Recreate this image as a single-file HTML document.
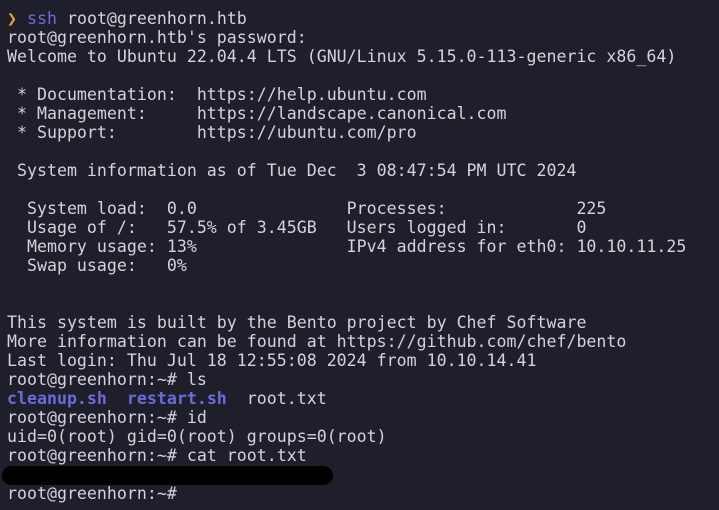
<!DOCTYPE html>
<html><head><style>
html,body{margin:0;padding:0;background:#1e1f2b;width:719px;height:510px;overflow:hidden}
pre{margin:0;position:absolute;left:7px;top:9px;font-family:"DejaVu Sans Mono","Liberation Mono",monospace;font-size:16.6px;line-height:19px;color:#d2d3dc;white-space:pre}
.o{color:#f0a030}.b{color:#6b6bdc}.bb{color:#6b6bdc;font-weight:bold}
.blob{position:absolute;left:2px;top:466px;width:331px;height:19px;background:#000;border-radius:10px}
</style></head><body>
<pre><span class="o">❯</span> <span class="b">ssh</span> root@greenhorn.htb
root@greenhorn.htb's password:
Welcome to Ubuntu 22.04.4 LTS (GNU/Linux 5.15.0-113-generic x86_64)

 * Documentation:  https://help.ubuntu.com
 * Management:     https://landscape.canonical.com
 * Support:        https://ubuntu.com/pro

 System information as of Tue Dec  3 08:47:54 PM UTC 2024

  System load:  0.0               Processes:             225
  Usage of /:   57.5% of 3.45GB   Users logged in:       0
  Memory usage: 13%               IPv4 address for eth0: 10.10.11.25
  Swap usage:   0%


This system is built by the Bento project by Chef Software
More information can be found at https://github.com/chef/bento
Last login: Thu Jul 18 12:55:08 2024 from 10.10.14.41
root@greenhorn:~# ls
<span class="bb">cleanup.sh</span>  <span class="bb">restart.sh</span>  root.txt
root@greenhorn:~# id
uid=0(root) gid=0(root) groups=0(root)
root@greenhorn:~# cat root.txt

root@greenhorn:~#</pre>
<div class="blob"></div>
</body></html>
